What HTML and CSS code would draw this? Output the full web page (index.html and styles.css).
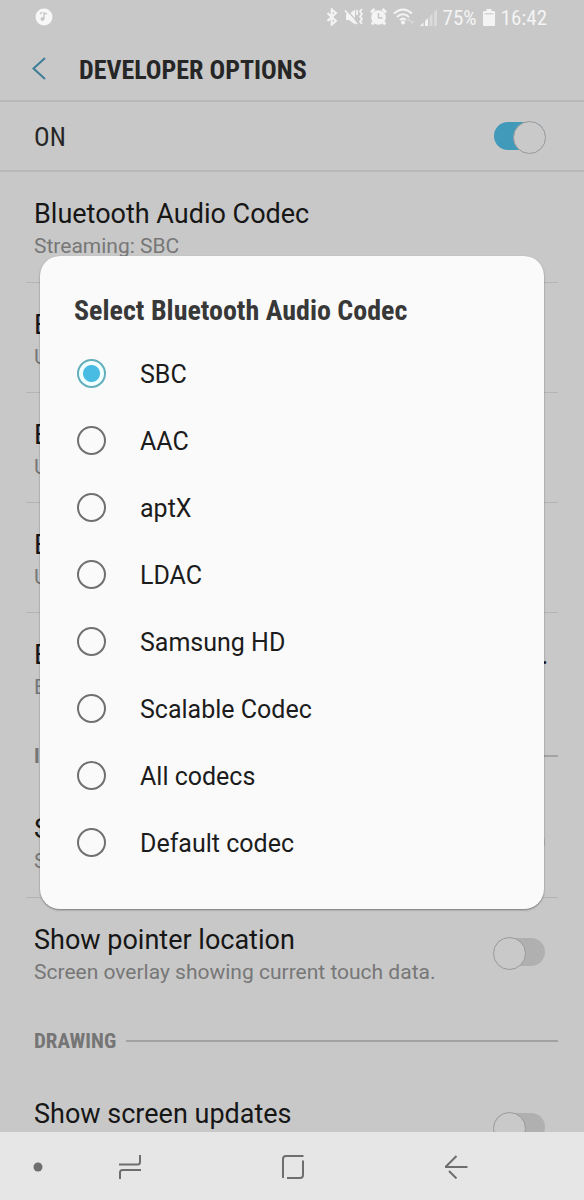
FILE: index.html
```html
<!DOCTYPE html>
<html lang="en">
<head>
<meta charset="utf-8">
<meta name="viewport" content="width=device-width, initial-scale=1">
<title>Developer options</title>
<link rel="stylesheet" href="styles.css">
</head>
<body>
<div class="screen">
  <div class="status-bar">
    <svg class="status-note" width="18" height="18" viewBox="0 0 18 18"><circle cx="9" cy="9" r="8.5" fill="#f7f7f7"/><circle cx="7.500" cy="11" r="2" fill="#c8c8c8"/><path d="M9 11V5l3 1M5 6l2-2" fill="none" stroke="#c8c8c8" stroke-width="1.4"/></svg>
    <div class="status-icons">
      <svg width="12" height="18" viewBox="0 0 12 18" fill="none" stroke="currentColor" stroke-width="2"><path d="M1.500 5l8.500 8-4.300 3.600V1.400L10 5l-8.500 8"/></svg>
      <svg width="20" height="18" viewBox="0 0 20 18"><path d="M2 6h3l6-4.500v15L5 12H2z" fill="currentColor"/><path d="M2.500 1.500l11 12.500" stroke="#c8c8c8" stroke-width="1.200"/><path d="M1 2.500l12 13.500" stroke="currentColor" stroke-width="1.800"/><path d="M13 2v5M18 1l-2 2.500 2 2.500-2 2.500 2 2.500-2 2.500 2 2.500" fill="none" stroke="currentColor" stroke-width="1.800"/></svg>
      <svg width="17" height="18" viewBox="0 0 17 18"><circle cx="8.500" cy="9.500" r="7.300" fill="currentColor"/><path d="M1 4.500L4.500 1M16 4.500L12.500 1M3.500 14L2 16.500M13.500 14l1.500 2.500" stroke="currentColor" stroke-width="2.600"/><path d="M8.500 5v5h4" fill="none" stroke="#c8c8c8" stroke-width="1.500"/></svg>
      <svg width="21" height="18" viewBox="0 0 21 18"><g fill="none" stroke="currentColor" stroke-width="2"><path d="M1 5.500Q10 -2.500 19 5.500M4 9Q10 3.500 16 9M7 12Q10 9.300 13 12"/></g><circle cx="10" cy="14.500" r="1.900" fill="currentColor"/><path d="M16 10l2 3h-4zM19 16l-2-3h4z" fill="currentColor" opacity=".4"/></svg>
      <svg width="17" height="17" viewBox="0 0 17 17" fill="currentColor"><path d="M0 17h3.500v-3.500L0 17z"/><path d="M5 17h3V9L5 12z"/><path d="M9.500 17h3V4.500l-3 3zM14 17h3V0l-3 3z" opacity=".4"/></svg>
      <span class="status-text">75%</span>
      <svg width="12" height="17" viewBox="0 0 12 17"><path d="M3.500 0h5v2H11q1 0 1 1v13q0 1-1 1H1q-1 0-1-1V3q0-1 1-1h2.500z" fill="currentColor"/><path d="M1.500 4h9v1.500h-9z" fill="#c8c8c8" opacity=".7"/></svg>
      <span class="status-text">16:42</span>
    </div>
  </div>

  <header class="app-header">
    <button class="back" type="button" aria-label="Back"><svg width="14" height="23" viewBox="0 0 14 23" fill="none" stroke="#3d7d97" stroke-width="2"><path d="M13 1L1.500 11.500 13 22"/></svg></button>
    <h1 class="app-title">DEVELOPER OPTIONS</h1>
  </header>

  <div class="master">
    <label for="master">ON</label>
    <input class="switch" type="checkbox" role="switch" id="master" checked>
  </div>

  <main class="settings">
    <div class="item"><div class="item-text"><div class="item-title">Bluetooth Audio Codec</div><div class="item-sub">Streaming: SBC</div></div></div>
    <div class="item"><div class="item-text"><div class="item-title">Bluetooth Audio Sample Rate</div><div class="item-sub">Use System Selection (Default)</div></div></div>
    <div class="item"><div class="item-text"><div class="item-title">Bluetooth Audio Bits Per Sample</div><div class="item-sub">Use System Selection (Default)</div></div></div>
    <div class="item"><div class="item-text"><div class="item-title">Bluetooth Audio Channel Mode</div><div class="item-sub">Use System Selection (Default)</div></div></div>
    <div class="item"><div class="item-text"><div class="item-title">Bluetooth Audio LDAC Codec: Playback Quality</div><div class="item-sub">Best Effort (Adaptive Bit Rate)</div></div></div>
    <h2 class="category">INPUT</h2>
    <div class="item"><div class="item-text"><label class="item-title" for="touches">Show touches</label><div class="item-sub">Show visual feedback for touches.</div></div><input class="switch" type="checkbox" role="switch" id="touches"></div>
    <div class="item"><div class="item-text"><label class="item-title" for="pointer">Show pointer location</label><div class="item-sub">Screen overlay showing current touch data.</div></div><input class="switch" type="checkbox" role="switch" id="pointer"></div>
    <h2 class="category">DRAWING</h2>
    <div class="item"><div class="item-text"><label class="item-title" for="updates">Show screen updates</label></div><input class="switch" type="checkbox" role="switch" id="updates"></div>
  </main>

  <nav class="nav-bar">
    <button type="button" aria-label="Hide navigation bar"><svg width="10" height="10" viewBox="0 0 10 10"><circle cx="5" cy="5" r="4.500" fill="#6e6e6e"/></svg></button>
    <button type="button" aria-label="Recents"><svg width="24" height="26" viewBox="0 0 24 26" fill="none" stroke="#6e6e6e" stroke-width="2"><path d="M1 10.500h18.500q2.500 0 2.500-2.500V1M2 25v-6.500q0-2.500 2.500-2.500H23"/></svg></button>
    <button type="button" aria-label="Home"><svg width="24" height="24" viewBox="0 0 24 24" fill="none" stroke="#6e6e6e" stroke-width="2"><path d="M2 23V4q0-3 3-3h17.500M22 5.500V20q0 3-3 3H6"/></svg></button>
    <button type="button" aria-label="Back"><svg width="24" height="24" viewBox="0 0 24 24" fill="none" stroke="#6e6e6e" stroke-width="2"><path d="M12.500 1L2 11.500v.5H23.500M5 16l7.500 7.500"/></svg></button>
  </nav>

  <div class="overlay">
    <form class="dialog" role="dialog" aria-labelledby="dialog-title">
      <h2 class="dialog-title" id="dialog-title">Select Bluetooth Audio Codec</h2>
      <label class="option"><input type="radio" name="codec" checked><span>SBC</span></label>
      <label class="option"><input type="radio" name="codec"><span>AAC</span></label>
      <label class="option"><input type="radio" name="codec"><span>aptX</span></label>
      <label class="option"><input type="radio" name="codec"><span>LDAC</span></label>
      <label class="option"><input type="radio" name="codec"><span>Samsung HD</span></label>
      <label class="option"><input type="radio" name="codec"><span>Scalable Codec</span></label>
      <label class="option"><input type="radio" name="codec"><span>All codecs</span></label>
      <label class="option"><input type="radio" name="codec"><span>Default codec</span></label>
    </form>
  </div>
</div>
</body>
</html>
```
FILE: styles.css
```css
* { box-sizing: border-box; }
body { margin: 0; background: #c8c8c8; color: #161616; font-family: Roboto, sans-serif; }
h1, h2 { margin: 0; }
button { display: flex; padding: 0; border: 0; background: none; }
svg { display: block; }

.screen { position: relative; display: flex; flex-direction: column; height: 100vh; overflow: hidden; }

.status-bar { display: flex; flex: none; align-items: center; justify-content: space-between; height: 34px; padding: 0 37px 0 35px; color: #f4f4f4; }
.status-icons { display: flex; align-items: center; gap: 6px; }
.status-text, .app-title, .master, .category, .dialog-title { font-family: "Roboto Condensed", "Liberation Sans Narrow", Roboto, sans-serif; }
.status-text { padding-top: 2px; font-size: 21px; line-height: 24px; }

.app-header { display: flex; flex: none; align-items: center; gap: 33px; height: 68px; padding: 2px 32px 0; border-bottom: 2px solid #b8b8b8; }
.app-title { padding-top: 3px; font-size: 26px; line-height: 32px; font-weight: 700; color: #262626; }

.master { display: flex; flex: none; align-items: center; justify-content: space-between; height: 70px; padding: 0 38px 0 34px; border-bottom: 2px solid #b8b8b8; font-size: 26px; line-height: 32px; color: #262626; }
.master label { padding-top: 2px; }

.switch { position: relative; flex: none; width: 53px; height: 31px; margin: 0; appearance: none; }
.switch::before { content: ""; display: block; height: 28px; margin: 1px 1px 0; border-radius: 14px; background: #b0b0b0; }
.switch::after { content: ""; position: absolute; top: 0; left: 0; width: 31px; height: 31px; border: 1px solid #999; border-radius: 50%; background: #c9c9c9; }
.switch:checked::before { background: #429aba; }
.switch:checked::after { right: 0; left: auto; }

.settings { flex: 1; min-height: 0; overflow: hidden; }
.item { display: flex; align-items: center; gap: 16px; height: 110px; margin: 0 26px; padding: 0 8px; }
.item + .item { border-top: 1px solid #b4b4b4; }
.item .switch { margin-right: 4px; }
.item-text { flex: 1; min-width: 0; height: 62px; }
.item-title { display: block; overflow: hidden; font-size: 27px; line-height: 36px; white-space: nowrap; text-overflow: ellipsis; }
.item-sub { font-size: 21px; line-height: 28px; color: #777; }
.category { display: flex; align-items: center; gap: 10px; height: 65px; margin: 0 26px 0 34px; padding-top: 2px; font-size: 21px; line-height: 26px; color: #757575; }
.category::after { content: ""; flex: 1; height: 2px; background: #a2a2a2; }

.nav-bar { display: grid; flex: none; grid-template-columns: 48px 1fr 1fr 1fr; align-items: center; justify-items: center; height: 68px; padding: 2px 46px 0 0; background: #e6e6e6; }
.nav-bar button:first-child { justify-self: end; padding-right: 5px; }

.overlay { position: absolute; inset: 34px 0 69px; display: flex; align-items: center; padding: 0 40px; }
.dialog { flex: 1; padding: 39px 34px 33px; border-radius: 20px; background: #fafafa; box-shadow: 0 1px 2px #00000066; }
.dialog-title { margin-bottom: 13px; font-size: 28px; line-height: 32px; color: #383838; }
.option { display: flex; align-items: center; gap: 34px; height: 67px; padding-left: 3px; font-size: 25px; color: #1c1c1c; }
.option span { padding-top: 2px; }
.option input { width: 29px; height: 29px; margin: 0; border: 2px solid #707070; border-radius: 50%; appearance: none; }
.option input:checked { border-color: #62aebb; background: radial-gradient(circle, #48bce2 8px, #f2ffff 9px); }
```
